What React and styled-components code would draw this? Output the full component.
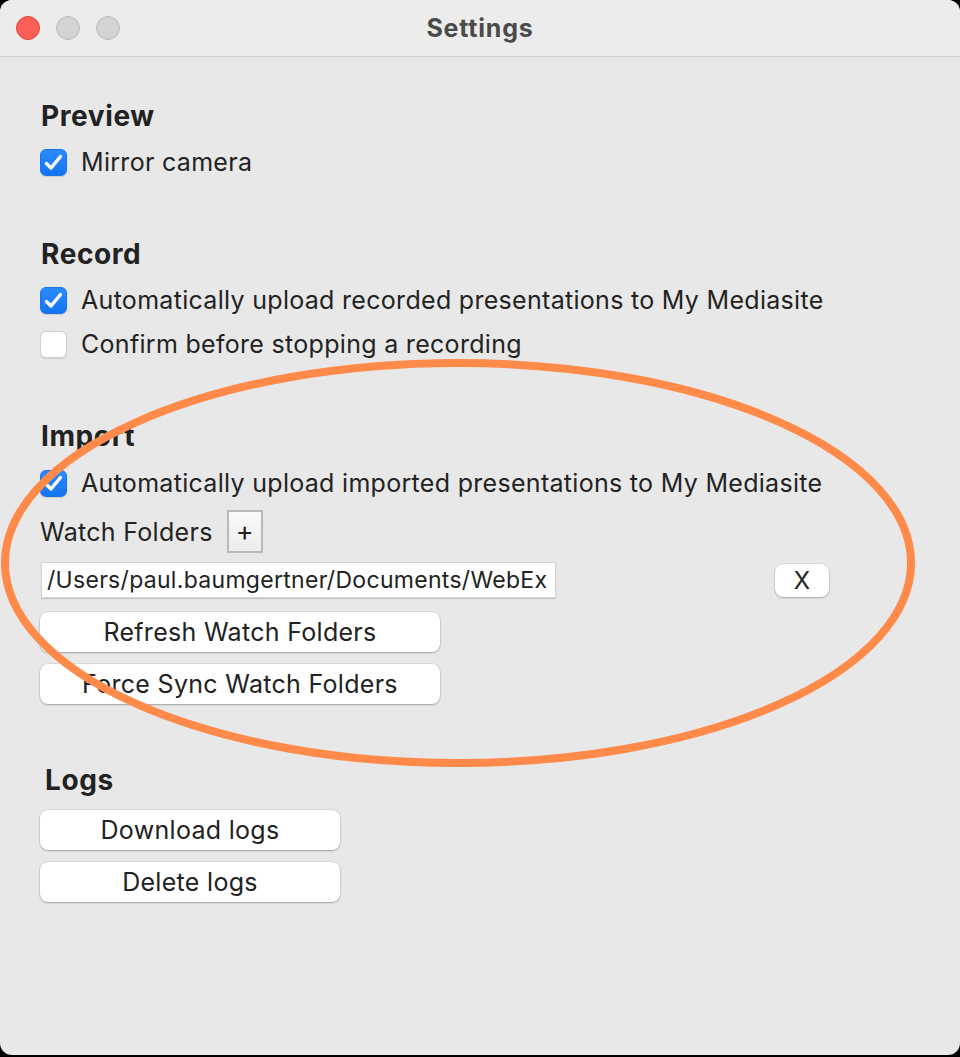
import React from "react";
import styled, { createGlobalStyle } from "styled-components";

const GlobalStyle = createGlobalStyle`
  html, body {
    margin: 0;
    padding: 0;
    background: #000;
  }
  body {
    font-family: Inter, "Noto Sans", "Liberation Sans", sans-serif;
  }
`;

const Window = styled.div`
  position: relative;
  width: 960px;
  height: 1055px;
  background: #e8e8e8;
  border-radius: 12px;
  overflow: hidden;
  display: flex;
  flex-direction: column;
`;

const TitleBar = styled.div`
  height: 56px;
  flex-shrink: 0;
  background: #ececec;
  border-bottom: 1px solid #cfcfcf;
  display: flex;
  align-items: center;
  position: relative;
`;

const Lights = styled.div`
  display: flex;
  gap: 16px;
  padding-left: 16px;
`;

const Light = styled.span`
  width: 24px;
  height: 24px;
  border-radius: 50%;
  box-sizing: border-box;
  background: ${(p) => (p.red ? "#fe5f57" : "#d3d3d3")};
  border: 1px solid ${(p) => (p.red ? "#e0443e" : "#bdbdbd")};
`;

const Title = styled.div`
  position: absolute;
  left: 0;
  right: 0;
  text-align: center;
  font-size: 25px;
  letter-spacing: 0.8px;
  font-weight: 700;
  color: #4b4b4b;
`;

const Content = styled.div`
  padding: 42px 0 0 40px;
  display: flex;
  flex-direction: column;
  color: #232323;
`;

const Heading = styled.h2`
  margin: ${(p) => p.top || 0}px 0 0 ${(p) => p.indent || 1}px;
  font-size: 28px;
  letter-spacing: 0.6px;
  line-height: 34px;
  font-weight: 700;
  color: #222;
`;

const Row = styled.label`
  display: flex;
  align-items: center;
  height: 36px;
  gap: 14px;
  margin-top: ${(p) => p.top || 0}px;
  font-size: 25px;
  letter-spacing: 0.3px;
`;

const Box = styled.span`
  width: 27px;
  height: 27px;
  box-sizing: border-box;
  border-radius: 6px;
  display: flex;
  align-items: center;
  justify-content: center;
  background: ${(p) => (p.checked ? "linear-gradient(#2b8cff, #1474f0)" : "#fff")};
  border: 1px solid ${(p) => (p.checked ? "#1a75eb" : "#d0d0d0")};
  box-shadow: 0 0.5px 1px rgba(0, 0, 0, 0.12);
`;

const FolderRow = styled.div`
  display: flex;
  align-items: center;
  gap: 14px;
  margin-top: 9px;
  height: 43px;
  font-size: 25px;
  letter-spacing: 0.3px;
`;

const PlusButton = styled.button`
  width: 36px;
  height: 43px;
  box-sizing: border-box;
  border: 2px solid #b9b9b9;
  background: linear-gradient(#fafafa, #ececec);
  font-family: inherit;
  font-size: 27px;
  color: #222;
  padding: 0;
  display: flex;
  align-items: center;
  justify-content: center;
`;

const PathRow = styled.div`
  display: flex;
  align-items: center;
  margin-top: 9px;
  height: 36px;
`;

const PathInput = styled.div`
  width: 515px;
  height: 36px;
  box-sizing: border-box;
  margin-left: 1px;
  background: #fff;
  border: 1px solid #d6d6d6;
  box-shadow: 0 1px 1px rgba(0, 0, 0, 0.15);
  font-size: 23px;
  letter-spacing: 0.3px;
  line-height: 34px;
  padding-left: 5px;
  white-space: nowrap;
  overflow: hidden;
  color: #222;
`;

const RemoveButton = styled.button`
  margin-left: 219px;
  width: 54px;
  height: 33px;
  border: none;
  border-radius: 8px;
  background: #fff;
  box-shadow: 0 0 0 0.5px rgba(0, 0, 0, 0.12), 0 1px 2px rgba(0, 0, 0, 0.25);
  font-family: inherit;
  font-size: 24px;
  color: #222;
  padding: 0;
`;

const PushButton = styled.button`
  width: ${(p) => p.w}px;
  height: 40px;
  margin-top: ${(p) => p.top}px;
  border: none;
  border-radius: 8px;
  background: #fff;
  box-shadow: 0 0 0 0.5px rgba(0, 0, 0, 0.12), 0 1px 2px rgba(0, 0, 0, 0.25);
  font-family: inherit;
  font-size: 25px;
  letter-spacing: 0.3px;
  color: #222;
  padding: 0;
`;

const Overlay = styled.svg`
  position: absolute;
  left: 0;
  top: 0;
  pointer-events: none;
`;

const Check = () => (
  <svg width="19" height="17" viewBox="0 0 19 17">
    <path
      d="M2.5 9.5 L7 14 L16.5 2.5"
      fill="none"
      stroke="#fff"
      strokeWidth="3.4"
      strokeLinecap="round"
      strokeLinejoin="round"
    />
  </svg>
);

const CheckRow = ({ checked, top, children }) => (
  <Row top={top}>
    <Box checked={checked}>{checked && <Check />}</Box>
    {children}
  </Row>
);

export default function App() {
  return (
    <>
      <GlobalStyle />
      <Window>
        <TitleBar>
          <Lights>
            <Light red />
            <Light />
            <Light />
          </Lights>
          <Title>Settings</Title>
        </TitleBar>
        <Content>
          <Heading>Preview</Heading>
          <CheckRow checked top={11}>Mirror camera</CheckRow>

          <Heading top={57}>Record</Heading>
          <CheckRow checked top={11}>
            Automatically upload recorded presentations to My Mediasite
          </CheckRow>
          <CheckRow top={8}>Confirm before stopping a recording</CheckRow>

          <Heading top={57}>Import</Heading>
          <CheckRow checked top={12}>
            Automatically upload imported presentations to My Mediasite
          </CheckRow>
          <FolderRow>
            <span>Watch Folders</span>
            <PlusButton>+</PlusButton>
          </FolderRow>
          <PathRow>
            <PathInput>/Users/paul.baumgertner/Documents/WebEx</PathInput>
            <RemoveButton>X</RemoveButton>
          </PathRow>
          <PushButton w={400} top={14}>Refresh Watch Folders</PushButton>
          <PushButton w={400} top={12}>Force Sync Watch Folders</PushButton>

          <Heading top={59} indent={5}>Logs</Heading>
          <PushButton w={300} top={13}>Download logs</PushButton>
          <PushButton w={300} top={12}>Delete logs</PushButton>
        </Content>
        <Overlay width="960" height="1055">
          <ellipse
            cx="458"
            cy="563"
            rx="453"
            ry="200"
            fill="none"
            stroke="#ff8a4a"
            strokeWidth="8"
          />
        </Overlay>
      </Window>
    </>
  );
}
